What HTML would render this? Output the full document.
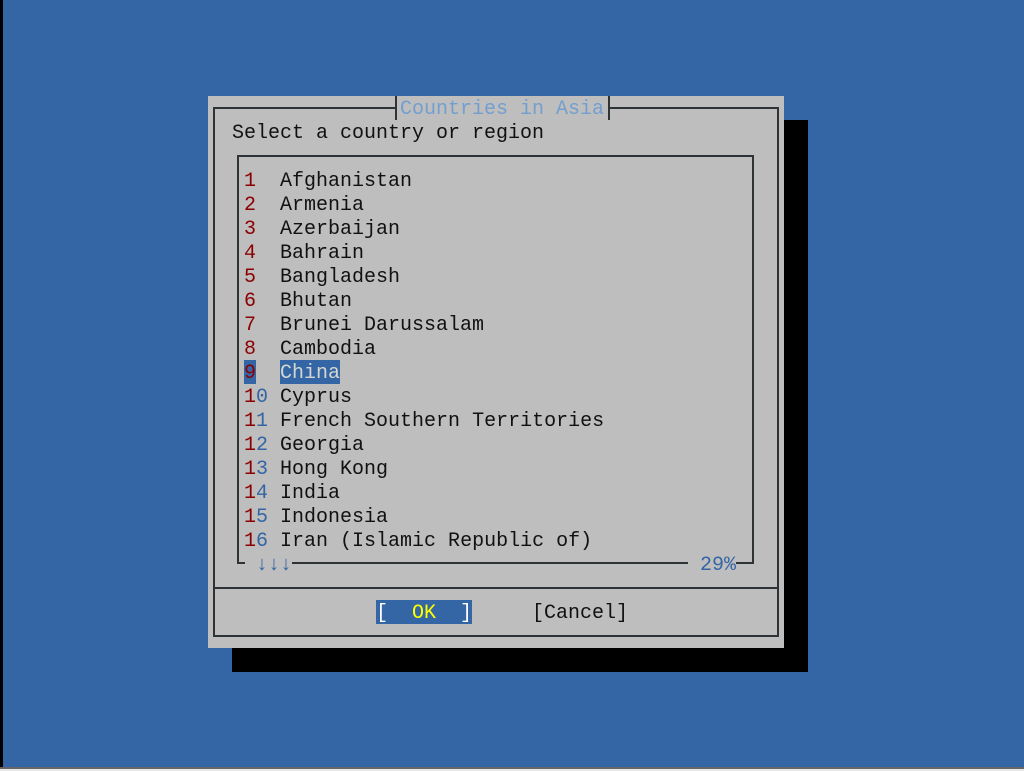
<!DOCTYPE html>
<html><head><style>
*{margin:0;padding:0}
body{width:1024px;height:771px;background:#3465a4;position:relative;overflow:hidden;font-family:"Liberation Mono","DejaVu Sans Mono",monospace;font-size:20px;line-height:24px;color:#111}
.a{position:absolute;white-space:pre}
.t{margin-top:2px}
.l{position:absolute;background:#2e3436}
.r{color:#8b0000}.b{color:#3465a4}
</style></head><body>
<div class="a" style="left:0;top:0;width:3px;height:768px;background:#000"></div>
<div class="a" style="left:0;top:767px;width:1024px;height:2px;background:#666"></div>
<div class="a" style="left:0;top:769px;width:1024px;height:2px;background:#e8e8e8"></div>
<div class="a" style="left:232px;top:120px;width:576px;height:552px;background:#000"></div>
<div class="a" style="left:208px;top:96px;width:576px;height:552px;background:#bebebe"></div>
<div class="l" style="left:213px;top:107px;width:183px;height:2px"></div>
<div class="l" style="left:609px;top:107px;width:170px;height:2px"></div>
<div class="l" style="left:395px;top:96px;width:2px;height:24px"></div>
<div class="l" style="left:608px;top:96px;width:2px;height:24px"></div>
<div class="l" style="left:213px;top:107px;width:2px;height:530px"></div>
<div class="l" style="left:777px;top:107px;width:2px;height:530px"></div>
<div class="l" style="left:213px;top:587px;width:566px;height:2px"></div>
<div class="l" style="left:213px;top:635px;width:566px;height:2px"></div>
<div class="a t" style="left:400px;top:96px;color:#729fcf">Countries in Asia</div>
<div class="a t" style="left:232px;top:120px">Select a country or region</div>
<div class="l" style="left:237px;top:155px;width:517px;height:2px"></div>
<div class="l" style="left:237px;top:155px;width:2px;height:409px"></div>
<div class="l" style="left:752px;top:155px;width:2px;height:409px"></div>
<div class="l" style="left:237px;top:562px;width:8px;height:2px"></div>
<div class="l" style="left:292px;top:562px;width:396px;height:2px"></div>
<div class="l" style="left:736px;top:562px;width:18px;height:2px"></div>
<div class="a b t" style="left:256px;top:552px">↓↓↓</div>
<div class="a b t" style="left:700px;top:552px">29%</div>
<div class="a" style="left:244px;top:360px;width:12px;height:24px;background:#3465a4"></div>
<div class="a" style="left:280px;top:360px;width:60px;height:24px;background:#3465a4"></div>
<div class="a t" style="left:244px;top:168px"><span class="r">1</span>  Afghanistan
<span class="r">2</span>  Armenia
<span class="r">3</span>  Azerbaijan
<span class="r">4</span>  Bahrain
<span class="r">5</span>  Bangladesh
<span class="r">6</span>  Bhutan
<span class="r">7</span>  Brunei Darussalam
<span class="r">8</span>  Cambodia
<span class="r">9</span>  <span style="color:#d3d7cf">China</span>
<span class="r">1</span><span class="b">0</span> Cyprus
<span class="r">1</span><span class="b">1</span> French Southern Territories
<span class="r">1</span><span class="b">2</span> Georgia
<span class="r">1</span><span class="b">3</span> Hong Kong
<span class="r">1</span><span class="b">4</span> India
<span class="r">1</span><span class="b">5</span> Indonesia
<span class="r">1</span><span class="b">6</span> Iran (Islamic Republic of)</div>
<div class="a" style="left:376px;top:600px;width:96px;height:24px;background:#3465a4"></div>
<div class="a t" style="left:376px;top:600px;color:#fff">[</div>
<div class="a t" style="left:412px;top:600px;color:#ffff00">OK</div>
<div class="a t" style="left:460px;top:600px;color:#fff">]</div>
<div class="a t" style="left:532px;top:600px">[Cancel]</div>
</body></html>
